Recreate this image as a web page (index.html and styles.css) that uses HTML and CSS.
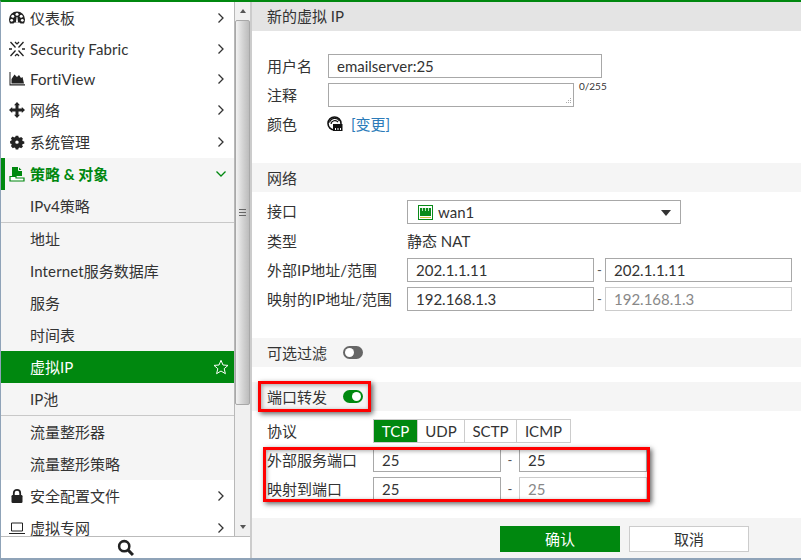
FILE: index.html
```html
<!DOCTYPE html>
<html lang="zh">
<head>
<meta charset="utf-8">
<title>新的虚拟 IP</title>
<link rel="stylesheet" href="styles.css">
</head>
<body>
<div class="app">
  <aside class="sidebar">
    <div class="nav-wrap">
      <nav class="nav">
        <div class="group-top">
          <a class="item"><svg class="ico" viewBox="0 0 16 16"><path d="M8 1.500A8 8 0 0 0 0 9.500c0 1.500.4 2.800 1 4h3.500l1-1h5l1 1H15c.6-1.200 1-2.500 1-4a8 8 0 0 0-8-8z" fill="#222"/><circle cx="8" cy="4.300" r="1.500" fill="#fff"/><circle cx="3.800" cy="6.300" r="1.500" fill="#fff"/><circle cx="12.200" cy="6.300" r="1.500" fill="#fff"/><circle cx="2.700" cy="10.300" r="1.400" fill="#fff"/><circle cx="13.300" cy="10.300" r="1.400" fill="#fff"/><path d="M6.900 12.500 7.600 7h.8l.7 5.500z" fill="#fff"/></svg><span class="label">仪表板</span><svg class="chev" viewBox="0 0 8 12"><path d="M1.500 1.500 6 6l-4.500 4.500" /></svg></a>
          <a class="item"><svg class="ico" viewBox="0 0 16 16"><path d="M1.500 1 6.500 6.500M14.500 1 9.500 6.500M1.500 15l5-5.500M14.500 15l-5-5.500M0 8h3M13 8h3M6 1 8 3M10 1 8 3M6 15l2-2M10 15l-2-2" stroke="#222" stroke-width="1.300" fill="none"/></svg><span class="label wide">Security Fabric</span><svg class="chev" viewBox="0 0 8 12"><path d="M1.500 1.500 6 6l-4.500 4.500" /></svg></a>
          <a class="item"><svg class="ico" viewBox="0 0 16 16"><path d="M.5 1v13.500H16v-1.200H1.500V1z" fill="#222"/><path d="M2.500 12.500V8L5.500 3.500 8 6l2-2 2 3 1.500-1 1.500 6.500z" fill="#222"/></svg><span class="label wide">FortiView</span><svg class="chev" viewBox="0 0 8 12"><path d="M1.500 1.500 6 6l-4.500 4.500" /></svg></a>
          <a class="item"><svg class="ico" viewBox="0 0 16 16"><path d="M8 0 11 3.200H9.500V6.500H12.800V5L16 8 12.800 11V9.500H9.500V12.800H11L8 16 5 12.800H6.500V9.500H3.200V11L0 8 3.200 5V6.500H6.500V3.200H5z" fill="#222"/></svg><span class="label">网络</span><svg class="chev" viewBox="0 0 8 12"><path d="M1.500 1.500 6 6l-4.500 4.500" /></svg></a>
          <a class="item"><svg class="ico" viewBox="0 0 16 16"><path fill-rule="evenodd" d="M6.500 1.500h3l.4 1.900 1.300.6 1.700-1 2.100 2.100-1 1.700.6 1.300 1.900.4v3l-1.900.4-.6 1.300 1 1.700-2.100 2.100-1.700-1-1.300.6-.4 1.900h-3l-.4-1.900-1.300-.6-1.700 1L.9 14.400l1-1.700-.6-1.300L0 11V8l1.300-.4.600-1.300-1-1.700L3 2.500l1.700 1 1.300-.6zM8 7.500a2 2 0 1 0 0 4 2 2 0 0 0 0-4z" transform="translate(1.100 .6) scale(.86 .8)" fill="#222"/></svg><span class="label">系统管理</span><svg class="chev" viewBox="0 0 8 12"><path d="M1.500 1.500 6 6l-4.500 4.500" /></svg></a>
        </div>
        <div class="group-open">
          <a class="item item-head"><svg class="ico" viewBox="0 0 16 16"><path d="M3 1h6.500L13 4.500V10H3z" fill="#00880f"/><path d="M9.500 1v3.500H13" fill="none" stroke="#f5f5f5"/><path d="M1 15v-4.500h6v1.500h8v3z" fill="#fff" stroke="#00880f" stroke-width="1.200"/></svg><span class="label">策略 &amp; 对象</span><svg class="chev chev-down" viewBox="0 0 12 8"><path d="M1.500 1.500 6 6l4.500-4.500" /></svg></a>
          <a class="sub">IPv4策略</a>
          <a class="sub sub-first">地址</a>
          <a class="sub"><span class="wide">Internet</span>服务数据库</a>
          <a class="sub">服务</a>
          <a class="sub">时间表</a>
          <a class="sub sub-active"><span class="label">虚拟IP</span><svg class="star" viewBox="0 0 16 16"><path d="M8 1.300 10 6l5 .4-3.800 3.300 1.200 5L8 12l-4.400 2.700 1.200-5L1 6.400 6 6z" fill="none" stroke="#fff" stroke-width="1"/></svg></a>
          <a class="sub">IP池</a>
          <a class="sub sub-first">流量整形器</a>
          <a class="sub">流量整形策略</a>
        </div>
        <a class="item item-low"><svg class="ico" viewBox="0 0 16 16"><path d="M4.800 7V5a3.200 3.200 0 0 1 6.400 0v2" fill="none" stroke="#222" stroke-width="1.800"/><rect x="2.500" y="7" width="11" height="8" rx="1.200" fill="#222"/></svg><span class="label">安全配置文件</span><svg class="chev" viewBox="0 0 8 12"><path d="M1.500 1.500 6 6l-4.500 4.500" /></svg></a>
        <a class="item item-low"><svg class="ico" viewBox="0 0 16 16"><path d="M2.500 3h11v8h-11z" fill="none" stroke="#222" stroke-width="1"/><path d="M0 13h16v1H0z" fill="#222"/></svg><span class="label">虚拟专网</span><svg class="chev" viewBox="0 0 8 12"><path d="M1.500 1.500 6 6l-4.500 4.500" /></svg></a>
      </nav>
      <div class="scrollbar">
        <span class="arrow arrow-up"></span>
        <div class="thumb"><span class="grip"></span></div>
        <span class="arrow arrow-down"></span>
      </div>
    </div>
    <div class="search">
      <svg class="search-ico" viewBox="0 0 16 16"><circle cx="6.800" cy="6.800" r="4.800" fill="none" stroke="#222" stroke-width="2.400"/><path d="M10.500 10.500 15 15" stroke="#222" stroke-width="2.800"/></svg>
    </div>
  </aside>

  <main class="main">
    <h1 class="page-title">新的虚拟 IP</h1>
    <div class="row row-name row-first">
      <span class="lbl">用户名</span>
      <div class="input input-wide">emailserver:25</div>
    </div>
    <div class="row row-name">
      <span class="lbl">注释</span>
      <div class="input textarea"><svg class="grab" viewBox="0 0 8 8"><path d="M6 1h1v1H6zM4 3h1v1H4zM6 3h1v1H6zM2 5h1v1H2zM4 5h1v1H4zM6 5h1v1H6z" fill="#aaa"/></svg></div>
      <span class="count">0/255</span>
    </div>
    <div class="row row-name">
      <span class="lbl">颜色</span>
      <svg class="color-ico" viewBox="0 0 16 16"><circle cx="7.500" cy="7.500" r="6.500" fill="none" stroke="#111" stroke-width="1.600"/><path d="M2.500 6.500a5.500 5.500 0 0 1 10-1.500M4 8a4 4 0 0 1 7-2" fill="none" stroke="#111" stroke-width="1.200"/><rect x="6" y="8" width="9.500" height="7" fill="#111"/><path d="M8 12h1v2H8zM10.500 12h1v2h-1zM13 12h1v2h-1z" fill="#fff"/></svg>
      <a class="link">[变更]</a>
    </div>

    <h2 class="section section-net">网络</h2>
    <div class="row row-net row-tight">
      <span class="lbl">接口</span>
      <div class="input select">
        <svg class="port-ico" viewBox="0 0 15 15"><rect x=".5" y=".5" width="14" height="14" fill="#fff" stroke="#0a8a1a"/><path d="M2 3h11v8H2z" fill="#0a8a1a"/><path d="M4 3h1v3H4zM7 3h1v3H7zM10 3h1v3h-1z" fill="#bfe3bf"/><path d="M2 12h11v1H2z" fill="#d8c13c"/></svg>
        <span class="select-text">wan1</span>
        <span class="caret"></span>
      </div>
    </div>
    <div class="row row-net">
      <span class="lbl">类型</span>
      <span class="value">静态 NAT</span>
    </div>
    <div class="row row-net">
      <span class="lbl">外部IP地址/范围</span>
      <div class="input input-range">202.1.1.11</div>
      <span class="dash">-</span>
      <div class="input input-range">202.1.1.11</div>
    </div>
    <div class="row row-net">
      <span class="lbl">映射的IP地址/范围</span>
      <div class="input input-range">192.168.1.3</div>
      <span class="dash">-</span>
      <div class="input input-range input-off">192.168.1.3</div>
    </div>

    <div class="section section-filter"><span>可选过滤</span><span class="toggle toggle-off"></span></div>
    <div class="section section-port"><span>端口转发</span><span class="toggle toggle-on"></span></div>

    <div class="row row-port row-tight">
      <span class="lbl">协议</span>
      <div class="tabs">
        <span class="tab tab-on tab-tcp">TCP</span><span class="tab tab-udp">UDP</span><span class="tab tab-sctp">SCTP</span><span class="tab tab-icmp">ICMP</span>
      </div>
    </div>
    <div class="row row-port">
      <span class="lbl">外部服务端口</span>
      <div class="input input-port">25</div>
      <span class="dash dash-port">-</span>
      <div class="input input-port">25</div>
    </div>
    <div class="row row-port">
      <span class="lbl">映射到端口</span>
      <div class="input input-port">25</div>
      <span class="dash dash-port">-</span>
      <div class="input input-port input-off">25</div>
    </div>

    <footer class="footer">
      <button class="btn btn-primary">确认</button>
      <button class="btn">取消</button>
    </footer>

    <div class="callout callout-toggle"></div>
    <div class="callout callout-ports"></div>
  </main>
</div>
</body>
</html>
```
FILE: styles.css
```css
* { box-sizing: border-box; }
html, body { margin: 0; padding: 0; }
body {
  width: 801px;
  height: 560px;
  overflow: hidden;
  background: #fff;
  color: #333;
  font: 15px/24px Lato, "Noto Sans CJK SC", sans-serif;
}
.app {
  display: flex;
  width: 801px;
  height: 560px;
  border-top: 2px solid #00880f;
  border-left: 1px solid #8fa3b8;
  border-bottom: 2px solid #8fa3b8;
}

/* sidebar */
.sidebar {
  display: flex;
  flex-direction: column;
  width: 249px;
  flex: none;
}
.nav-wrap { display: flex; height: 534px; flex: none; }
.nav { width: 233px; flex: none; overflow: hidden; }
.group-top .item { height: 31px; }
.group-top .item:nth-child(3),
.group-top .item:nth-child(4) { padding-bottom: 1px; }
.group-top .item:last-child { height: 32px; }
.item {
  display: flex;
  align-items: center;
  height: 32px;
  padding-left: 8px;
  padding-right: 9px;
  color: #333;
}
.ico { width: 16px; height: 16px; flex: none; margin-right: 5px; }
.label { flex: 1; white-space: nowrap; }
.wide { letter-spacing: .13px; }
.chev { width: 8px; height: 12px; flex: none; fill: none; stroke: #333; stroke-width: 1.300; }
.chev-down { width: 12px; height: 8px; stroke: #00880f; margin-right: -2px; }
.group-open { background: #f5f5f5; }
.item-head {
  color: #00880f;
  font-weight: 700;
  border-left: 4px solid #00880f;
  padding-left: 4px;
}
.sub {
  display: flex;
  align-items: center;
  height: 32px;
  padding-left: 29px;
  padding-right: 5px;
  white-space: nowrap;
}
.sub-first { border-top: 1px solid #c8c8c8; height: 33px; }
.sub-active { background: #00880f; color: #fff; }
.star { width: 16px; height: 16px; flex: none; }

/* scrollbar */
.scrollbar {
  position: relative;
  width: 16px;
  flex: none;
  display: flex;
  flex-direction: column;
  background: #f0f0f0;
  border-left: 1px solid #b8b8b8;
}
.arrow { height: 18px; flex: none; display: flex; align-items: center; justify-content: center; }
.arrow::before { content: ""; border: 3px solid transparent; }
.arrow-up::before { border-bottom: 4px solid #555; border-top: 0; }
.arrow-down::before { border-top: 4px solid #555; border-bottom: 0; }
.thumb {
  height: 385px;
  width: 15px;
  display: flex;
  align-items: center;
  justify-content: center;
  border: 1px solid #a8a8a8;
  border-radius: 2px;
  background: linear-gradient(90deg, #f2f2f2, #d2d2d2 55%, #bcbcbc);
}
.grip { width: 7px; height: 7px; border-top: 1px solid #666; border-bottom: 1px solid #666; background: linear-gradient(#666, #666) center / 100% 1px no-repeat; }
.arrow-down { margin-top: auto; }
.search {
  display: flex;
  align-items: center;
  justify-content: center;
  height: 24px;
  border-top: 1px solid #bbb;
}
.search-ico { width: 17px; height: 17px; }

/* main */
.main {
  position: relative;
  flex: 1;
  min-width: 0;
  display: flex;
  flex-direction: column;
  border-left: 2px solid #ccc;
}
.page-title {
  margin: 0;
  height: 29px;
  padding-left: 15px;
  background: #e4e4e4;
  font: inherit;
  line-height: 29px;
}
.row { display: flex; align-items: center; height: 24px; margin-top: 5px; padding-left: 15px; flex: none; }
.row-first { margin-top: 23px; }
.row-tight { margin-top: 8px; }
.lbl { flex: none; white-space: nowrap; }
.row-name .lbl { width: 61px; }
.row-net .lbl { width: 140px; }
.row-net.row-tight .lbl { margin-top: -2px; }
.row-port .lbl { width: 106px; }
.input {
  height: 24px;
  border: 1px solid #a8a8a8;
  padding-left: 8px;
  line-height: 22px;
  flex: none;
  background: #fff;
}
.input-wide { width: 274px; }
.textarea { position: relative; width: 246px; }
.grab { position: absolute; right: 1px; bottom: 1px; width: 8px; height: 8px; }
.count { font-size: 10px; line-height: 12px; margin: -19px 0 0 5px; }
.color-ico { width: 16px; height: 16px; flex: none; margin-left: -1px; }
.link { color: #2b7bb9; margin-left: 8px; }
.section {
  margin: 0;
  display: flex;
  align-items: center;
  height: 29px;
  padding-left: 15px;
  background: #f5f5f5;
  font: inherit;
  flex: none;
}
.section-net { margin-top: 27px; }
.section-filter { margin-top: 27px; }
.section-port { margin-top: 15px; }
.select { position: relative; display: flex; align-items: center; width: 274px; padding-left: 10px; }
.port-ico { width: 15px; height: 15px; flex: none; }
.select-text { margin-left: 5px; }
.caret {
  position: absolute;
  right: 9px;
  top: 9px;
  border: 5px solid transparent;
  border-top: 6px solid #333;
  border-bottom: 0;
}
.input-range { width: 187px; }
.dash { width: 11px; flex: none; text-align: center; color: #555; font-size: 13px; }
.input-off { color: #888; border-color: #ccc; }
.toggle {
  position: relative;
  width: 20px;
  height: 13px;
  margin-left: 16px;
  border-radius: 7px;
  background: #666;
}
.toggle::after {
  content: "";
  position: absolute;
  top: 2px;
  width: 9px;
  height: 9px;
  border-radius: 50%;
  background: #fff;
}
.toggle-off::after { left: 2px; }
.toggle-on { background: #00880f; }
.toggle-on::after { right: 2px; }
.tabs { display: flex; height: 24px; border: 1px solid #ccc; width: 198px; }
.tab { display: flex; align-items: center; justify-content: center; height: 22px; border-left: 1px solid #ccc; }
.tab-tcp { width: 43px; border-left: 0; }
.tab-udp { width: 47px; }
.tab-sctp { width: 52px; }
.tab-icmp { width: 54px; }
.tab-on { background: #00880f; color: #fff; }
.input-port { width: 128px; }
.dash-port { width: 18px; }
.footer {
  display: flex;
  gap: 9px;
  margin-top: auto;
  height: 40px;
  padding: 8px 0 0 248px;
  background: #f4f4f4;
}
.btn {
  width: 120px;
  height: 26px;
  padding: 0;
  border: 1px solid #ccc;
  background: #fff;
  color: #333;
  font: inherit;
  line-height: 24px;
}
.btn-primary { border-color: #00880f; background: #00880f; color: #fff; }

/* annotation overlays */
.callout {
  position: absolute;
  border: 3px solid #f00;
  box-shadow: 2px 2px 5px rgba(0, 0, 0, .6), inset 1px 1px 4px rgba(0, 0, 0, .35);
}
.callout-toggle { left: 6px; top: 379px; width: 113px; height: 31px; }
.callout-ports { left: 11px; top: 445px; width: 387px; height: 55px; }
```
